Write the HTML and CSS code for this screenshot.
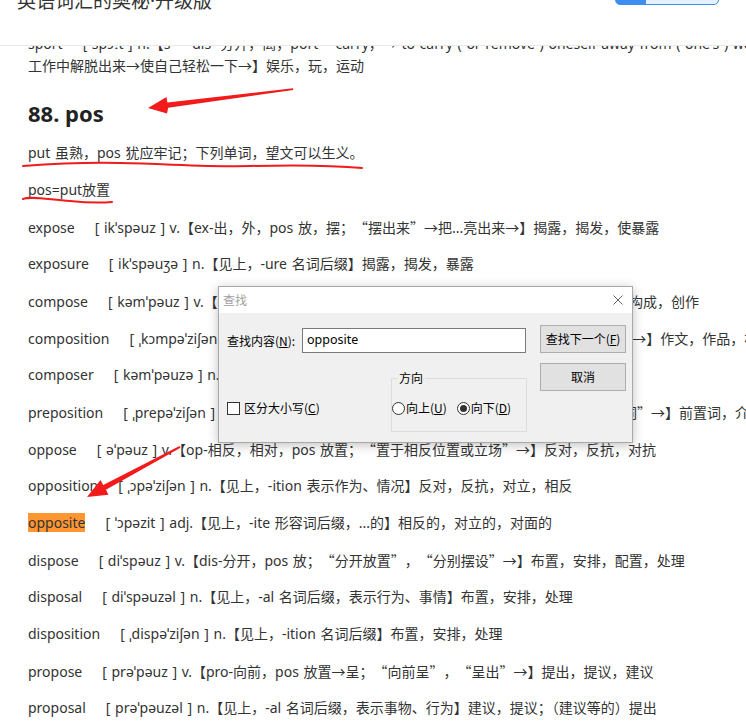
FILE: index.html
```html
<!DOCTYPE html>
<html lang="zh-CN">
<head>
<meta charset="utf-8">
<title>英语词汇的奥秘·升级版</title>
<link rel="stylesheet" href="styles.css">
</head>
<body>
<header class="topbar">
  <h1 class="book-title">英语词汇的奥秘<span class="dot">·</span>升级版</h1>
  <div class="progress"></div>
</header>
<main class="content">
  <p class="line clipped"><span class="w">sport</span>[ spɔːt ] n.【s- = dis- 分开，离，port = carry，→ to carry ( or remove ) oneself away from ( one's ) work→从<br>工作中解脱出来→使自己轻松一下→】娱乐，玩，运动</p>
  <h2 class="section">88. pos</h2>
  <p class="line">put 虽熟，pos 犹应牢记；下列单词，望文可以生义。</p>
  <p class="line">pos=put放置</p>
  <p class="line"><span class="w">expose</span>[ ikˈspəuz ] v.【ex-出，外，pos 放，摆；<span class="qo">“</span>摆出来<span class="qc">”</span>→把...亮出来→】揭露，揭发，使暴露</p>
  <p class="line"><span class="w">exposure</span>[ ikˈspəuʒə ] n.【见上，-ure 名词后缀】揭露，揭发，暴露</p>
  <p class="line"><span class="w">compose</span>[ kəmˈpəuz ] v.【com-共同，一起，pos 放置；<span class="qo">“</span>放在一起<span class="qc">”</span>→组合而成→】组成，构成，创作</p>
  <p class="line"><span class="w">composition</span>[ ˌkɔmpəˈziʃən ] n.【见上，-ition 名词后缀，表示行为、结果；<span class="qo">“</span>组合成的东西<span class="qc">”</span>→】作文，作品，构成，组成</p>
  <p class="line"><span class="w">composer</span>[ kəmˈpəuzə ] n.【见上，-er 表示人】作曲家，作者</p>
  <p class="line"><span class="w">preposition</span>[ ˌprepəˈziʃən ] n.【pre-前，pos 放置；<span class="qo">“</span>放在名词、代词等前面用以表示关系的词<span class="qc">”</span>→】前置词，介词</p>
  <p class="line"><span class="w">oppose</span>[ əˈpəuz ] v.【op-相反，相对，pos 放置；<span class="qo">“</span>置于相反位置或立场<span class="qc">”</span>→】反对，反抗，对抗</p>
  <p class="line"><span class="w">opposition</span>[ ˌɔpəˈziʃən ] n.【见上，-ition 表示作为、情况】反对，反抗，对立，相反</p>
  <p class="line"><span class="w hl">opposite</span>[ ˈɔpəzit ] adj.【见上，-ite 形容词后缀，...的】相反的，对立的，对面的</p>
  <p class="line"><span class="w">dispose</span>[ diˈspəuz ] v.【dis-分开，pos 放；<span class="qo">“</span>分开放置<span class="qc">”</span>，<span class="qo">“</span>分别摆设<span class="qc">”</span>→】布置，安排，配置，处理</p>
  <p class="line"><span class="w">disposal</span>[ diˈspəuzəl ] n.【见上，-al 名词后缀，表示行为、事情】布置，安排，处理</p>
  <p class="line"><span class="w">disposition</span>[ ˌdispəˈziʃən ] n.【见上，-ition 名词后缀】布置，安排，处理</p>
  <p class="line"><span class="w">propose</span>[ prəˈpəuz ] v.【pro-向前，pos 放置→呈；<span class="qo">“</span>向前呈<span class="qc">”</span>，<span class="qo">“</span>呈出<span class="qc">”</span>→】提出，提议，建议</p>
  <p class="line"><span class="w">proposal</span>[ prəˈpəuzəl ] n.【见上，-al 名词后缀，表示事物、行为】建议，提议；（建议等的）提出</p>
</main>

<svg class="marks" width="746" height="724" viewBox="0 0 746 724" aria-hidden="true">
  <polygon points="148,108 166.5,97 167.4,102.6 293,88.2 293.2,89.9 168.2,107.8 167,113.5" fill="#f21b1b"/>
  <polygon points="87,497 100.5,480 103.2,485 179.5,446 180.5,447.8 105.9,489.8 108.5,494.8" fill="#f21b1b"/>
  <path d="M23,166 C50,164 80,162 120,163 C170,164 210,167 250,166 C290,165 330,165 362,168" stroke="#f21b1b" stroke-width="2" fill="none" stroke-linecap="round"/>
  <path d="M23,199 C30,196 45,199 70,201 C90,203 100,203 112,202" stroke="#f21b1b" stroke-width="2" fill="none" stroke-linecap="round"/>
</svg>

<div class="find-dialog">
  <div class="titlebar">
    <span class="dlg-title">查找</span>
    <svg class="close" width="10" height="10" viewBox="0 0 10 10"><path d="M0.5,0.5 L9.5,9.5 M9.5,0.5 L0.5,9.5" stroke="#666" stroke-width="1" fill="none"/></svg>
  </div>
  <div class="dlg-body">
    <div class="left-col">
      <div class="find-row">
        <span class="find-label">查找内容(<u>N</u>):</span>
        <div class="find-input">opposite</div>
      </div>
      <div class="opt-row">
        <div class="check"><span class="box"></span>区分大小写(<u>C</u>)</div>
        <fieldset class="dir">
          <legend>方向</legend>
          <div class="radios">
            <span class="radio"><span class="circle"></span>向上(<u>U</u>)</span>
            <span class="radio"><span class="circle on"></span>向下(<u>D</u>)</span>
          </div>
        </fieldset>
      </div>
    </div>
    <div class="btn-col">
      <div class="btn">查找下一个(<u>F</u>)</div>
      <div class="btn">取消</div>
    </div>
  </div>
</div>
</body>
</html>
```

FILE: styles.css
```css
html, body {
  margin: 0;
  padding: 0;
}
body {
  position: relative;
  width: 746px;
  height: 724px;
  overflow: hidden;
  background: #fff;
  color: #333;
  font-family: "Noto Sans", "Noto Sans CJK SC", sans-serif;
  font-size: 14px;
}

/* header */
.topbar {
  position: relative;
  z-index: 2;
  height: 45px;
  border-bottom: 1px solid #e8e8e8;
  background: #fff;
  display: flex;
  justify-content: space-between;
  align-items: flex-start;
  padding: 0 27px 0 17px;
  overflow: hidden;
}
.book-title {
  margin: -14px 0 0;
  font-family: "Noto Sans CJK SC", sans-serif;
  font-size: 19px;
  font-weight: normal;
  line-height: 28px;
  color: #333;
}
.dot {
  font-family: "Noto Sans", sans-serif;
}
.progress {
  width: 102px;
  height: 28px;
  margin-top: -25px;
  border: 1px solid #3d8ef0;
  border-radius: 5px;
  background: linear-gradient(to right, #3d8ef0 0 30px, #e6f1fe 30px);
}

/* content */
.content {
  padding: 0 0 0 28px;
}
.line {
  height: 22px;
  margin: 15px 0 0;
  line-height: 22px;
  white-space: nowrap;
  word-spacing: 1px;
}
.clipped {
  height: 44px;
  margin-top: -13px;
}
.section {
  margin: 21px 0 0;
  font-size: 22px;
  line-height: 30px;
  height: 30px;
  font-weight: bold;
  color: #222;
}
.section + .line {
  margin-top: 14px;
}
.w {
  margin-right: 20px;
}
.hl {
  background: #ff9632;
}
.qo, .qc {
  display: inline-block;
  width: 14px;
  font-family: "Noto Sans CJK SC", sans-serif;
}
.qo {
  text-align: right;
}
.qc {
  text-align: left;
}

/* annotation marks */
.marks {
  position: absolute;
  left: 0;
  top: 0;
  z-index: 3;
  pointer-events: none;
}

/* find dialog */
.find-dialog {
  position: absolute;
  left: 218px;
  top: 286px;
  z-index: 4;
  width: 413px;
  height: 155px;
  border: 1px solid #a8a8a8;
  background: #f0f0f0;
  box-shadow: 0 2px 10px rgba(0, 0, 0, 0.25);
  font-family: "Noto Sans CJK SC", sans-serif;
  font-size: 12px;
  color: #000;
}
.titlebar {
  height: 26px;
  background: #fff;
  display: flex;
  align-items: center;
  justify-content: space-between;
  padding: 0 9px 0 4px;
}
.dlg-title {
  color: #a0a0a0;
  line-height: 16px;
}
.close {
  display: block;
}
.dlg-body {
  display: grid;
  grid-template-columns: 300px 86px;
  column-gap: 13px;
  padding: 12px 6px 0 8px;
}
.find-row {
  margin-top: 3px;
  display: flex;
  align-items: center;
  height: 25px;
}
.find-label {
  width: 75px;
  line-height: 16px;
}
.find-input {
  box-sizing: border-box;
  width: 224px;
  height: 25px;
  border: 1px solid #7a7a7a;
  background: #fff;
  padding-left: 4px;
  font-family: "Noto Sans", sans-serif;
  font-size: 12.5px;
  line-height: 22px;
}
.opt-row {
  margin-top: 17px;
  display: flex;
  justify-content: space-between;
  align-items: flex-start;
}
.check {
  margin-top: 30px;
  display: flex;
  align-items: center;
  line-height: 16px;
}
.box {
  box-sizing: border-box;
  width: 13px;
  height: 13px;
  border: 1px solid #333;
  background: #fff;
  margin-right: 4px;
}
.dir {
  box-sizing: border-box;
  width: 136px;
  height: 62px;
  margin: 0;
  padding: 0;
  border: 1px solid #dcdcdc;
}
.dir legend {
  margin-left: 5px;
  padding: 0 2px;
  line-height: 16px;
}
.radios {
  margin-top: 14px;
  display: flex;
  align-items: center;
  line-height: 16px;
}
.radio {
  display: flex;
  align-items: center;
}
.radio + .radio {
  margin-left: 10px;
}
.circle {
  box-sizing: border-box;
  width: 13px;
  height: 13px;
  border: 1px solid #333;
  border-radius: 50%;
  background: #fff;
  margin-right: 1px;
  display: flex;
  align-items: center;
  justify-content: center;
}
.circle.on::after {
  content: "";
  width: 7px;
  height: 7px;
  border-radius: 50%;
  background: #333;
}
.btn-col {
  display: flex;
  flex-direction: column;
  gap: 10px;
}
.btn {
  box-sizing: border-box;
  height: 28px;
  border: 1px solid #adadad;
  background: #e1e1e1;
  display: flex;
  align-items: center;
  justify-content: center;
  line-height: 16px;
}
```
